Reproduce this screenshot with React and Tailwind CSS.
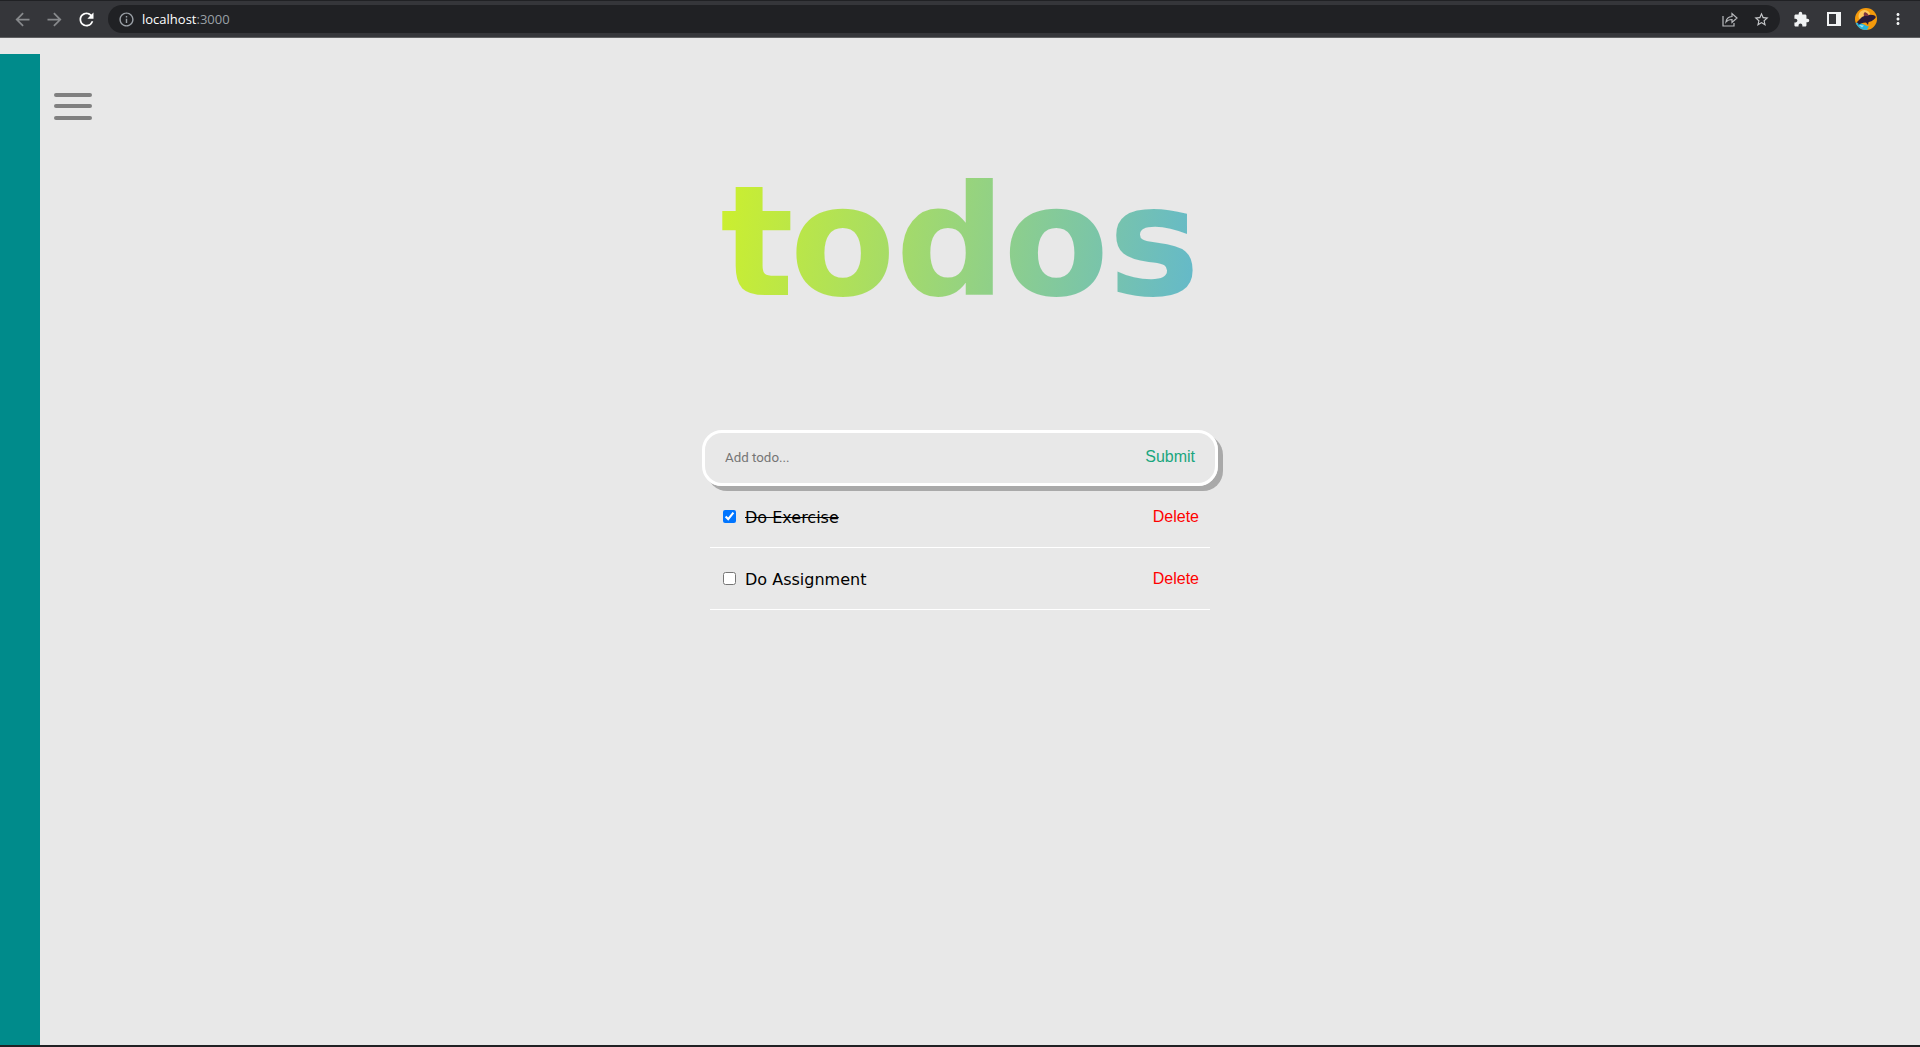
import { MdArrowBack, MdArrowForward, MdRefresh, MdInfoOutline, MdStarBorder, MdExtension, MdMoreVert } from "react-icons/md";

function Avatar() {
  return (
    <svg width="22" height="22" viewBox="0 0 22 22">
      <defs>
        <clipPath id="avatar">
          <circle cx="11" cy="11" r="11" />
        </clipPath>
      </defs>
      <g clipPath="url(#avatar)">
        <rect width="22" height="22" fill="#f59a0b" />
        <circle cx="9.500" cy="8" r="6" fill="#fdc65c" />
        <path d="M0 15 Q5 14 9 16.500 T14 18 L12 22 H0Z" fill="#28b4dc" />
        <path d="M1.5 14.5 Q5 11 7 9 Q12 6 18 7 Q21.5 8 20.500 10 Q17 14 11 14.500 Q6 14.5 3.5 17 Q4 15 1.5 14.5Z" fill="#2a1b38" />
        <path d="M9 8 Q8 5 10 4 Q13 5 14 8Z" fill="#7c3440" />
        <path d="M10 13 L13 17 L14 12Z" fill="#2a1b38" />
        <path d="M4 17 L9 17.5 L7 19.500Z" fill="#9ce4f4" />
      </g>
    </svg>
  );
}

function BrowserBar() {
  return (
    <header className="flex h-[38px] shrink-0 items-center border-b border-t border-b-[#5f6062] border-t-[#202124] bg-[#35363a] pl-[12px] pr-[13px]">
      <MdArrowBack className="mr-[11px] size-[21px] text-[#87898c]" />
      <MdArrowForward className="mr-[11px] size-[21px] text-[#87898c]" />
      <MdRefresh className="size-[21px] text-white" />
      <div className="ml-[11px] flex h-[28px] flex-1 items-center rounded-full bg-[#202124] pl-[10px] pr-[10px]">
        <MdInfoOutline className="size-[17px] text-[#9aa0a6]" />
        <span className="ml-[7px] font-['Open_Sans',sans-serif] text-[13px] font-medium leading-none text-white">
          localhost<span className="font-normal text-[#9aa0a6]">:3000</span>
        </span>
        <svg className="ml-auto" width="16" height="15" viewBox="0 0 16 15" fill="none" stroke="#b9bbbe" strokeWidth="1.2">
          <path d="M1 4v10h11v-3" />
          <path d="M4 10Q4.500 5 10 4.500V1.500L15 6L10 10.500V7.500Q6 7.500 4 10Z" />
        </svg>
        <MdStarBorder className="ml-[15px] size-[17px] text-[#c6c8ca]" />
      </div>
      <MdExtension className="ml-[13px] size-[17px] text-[#f1f3f4]" />
      <svg className="ml-[17px]" width="14" height="14" viewBox="0 0 14 14">
        <path fillRule="evenodd" d="M0 0H14V14H0ZM2 2V12H9V2Z" fill="#f1f3f4" />
      </svg>
      <div className="ml-[14px]"><Avatar /></div>
      <MdMoreVert className="ml-[12px] size-[18px] text-[#f1f3f4]" />
    </header>
  );
}

function TodoRow({ label, done }) {
  return (
    <li className="flex h-[62px] items-center border-b border-white pl-[13px] pr-[11px]">
      <input type="checkbox" defaultChecked={done} className="size-[13px]" />
      <span className={done ? "ml-[9px] pt-0.5 text-base line-through" : "ml-[9px] pt-0.5 text-base"}>{label}</span>
      <button className="ml-auto font-['Liberation_Sans',Arial,sans-serif] text-base text-[#ff0000]">Delete</button>
    </li>
  );
}

export default function App() {
  return (
    <div className="flex h-[1047px] flex-col border-b-2 border-[#202124] bg-[#e8e8e8] font-['DejaVu_Sans',Verdana,sans-serif] text-black">
      <BrowserBar />
      <div className="flex flex-1 pt-4">
        <aside className="w-10 bg-[#008b8b]" />
        <main className="relative -ml-10 flex flex-1 flex-col items-center">
          <button aria-label="Menu" className="absolute left-[54px] top-[39px] flex flex-col gap-[7.3px]">
            <span className="h-1 w-[38px] rounded-full bg-[#808080]" />
            <span className="h-1 w-[38px] rounded-full bg-[#808080]" />
            <span className="h-1 w-[38px] rounded-full bg-[#808080]" />
          </button>
          <h1 className="mt-[98px] bg-[linear-gradient(98deg,#cdf02c,#62b8cd)] bg-clip-text text-[154px] font-bold leading-[180px] text-transparent">
            <span className="tracking-[-4px]">t</span>o<span className="tracking-[-2.5px]">d</span><span className="tracking-[-1px]">o</span>s
          </h1>
          <form className="mt-[98px] flex h-14 w-[516px] items-center justify-between rounded-[20px] border-[3px] border-white pl-5 pr-5 shadow-[5px_5px_0_#a9a9a9]">
            <input placeholder="Add todo..." className="w-80 font-['Roboto',sans-serif] text-[13.333px] outline-none placeholder:text-[#757575]" />
            <button type="button" className="pb-0.5 font-['Liberation_Sans',Arial,sans-serif] text-base text-[#1aa67e]">Submit</button>
          </form>
          <ul className="w-[500px]">
            <TodoRow label="Do Exercise" done />
            <TodoRow label="Do Assignment" />
          </ul>
        </main>
      </div>
    </div>
  );
}
